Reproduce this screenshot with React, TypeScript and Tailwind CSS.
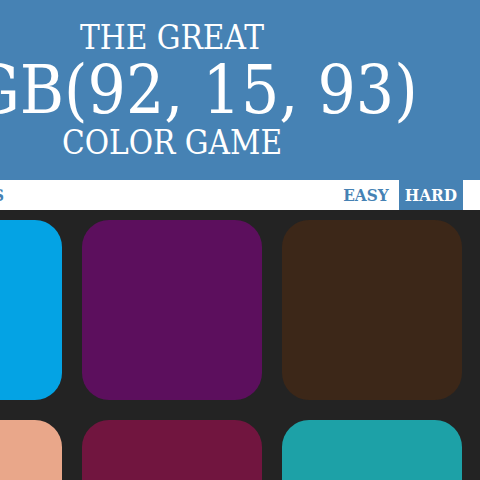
import { useState } from "react";

const colors = [
  { name: "rgb(4, 163, 228)", tile: "bg-[#04a3e4]" },
  { name: "rgb(92, 15, 93)", tile: "bg-[#5c0f5d]" },
  { name: "rgb(60, 39, 24)", tile: "bg-[#3c2718]" },
  { name: "rgb(233, 167, 138)", tile: "bg-[#e9a78a]" },
  { name: "rgb(113, 21, 63)", tile: "bg-[#71153f]" },
  { name: "rgb(29, 161, 167)", tile: "bg-[#1da1a7]" },
];

const modes = ["EASY", "HARD"];

export default function App() {
  const [mode, setMode] = useState("HARD");

  return (
    <div className="h-screen overflow-hidden bg-[#232323] font-['DejaVu_Serif_Condensed','DejaVu_Serif',serif]">
      <header className="flex justify-end bg-[#4682b4] py-5 pr-2 text-white">
        <h1 className="w-[600px] shrink-0 text-center text-[33px] leading-[35px]">
          THE GREAT
          <span className="block text-[67px] leading-[70px] whitespace-nowrap">RGB(92, 15, 93)</span>
          COLOR GAME
        </h1>
      </header>

      <nav className="flex h-[30px] justify-end bg-white pr-2 text-[17px] font-bold text-[#4682b4]">
        <div className="flex w-[600px] shrink-0 justify-between pr-[9px]">
          <button className="w-[132px] shrink-0 pt-[2px] text-right whitespace-nowrap">NEW COLORS</button>
          <div className="flex gap-1">
            {modes.map((item) => (
              <button
                key={item}
                aria-pressed={mode === item}
                onClick={() => setMode(item)}
                className={item === mode ? "bg-[#4682b4] px-[6px] pt-[2px] text-white" : "px-[6px] pt-[2px]"}
              >
                {item}
              </button>
            ))}
          </div>
        </div>
      </nav>

      <main className="flex justify-end pr-2">
        <div className="grid w-[600px] shrink-0 grid-cols-3 gap-5 p-[10px]">
          {colors.map((color) => (
            <button
              key={color.name}
              aria-label={color.name}
              className={`aspect-square rounded-[15%] ${color.tile}`}
            />
          ))}
        </div>
      </main>
    </div>
  );
}
